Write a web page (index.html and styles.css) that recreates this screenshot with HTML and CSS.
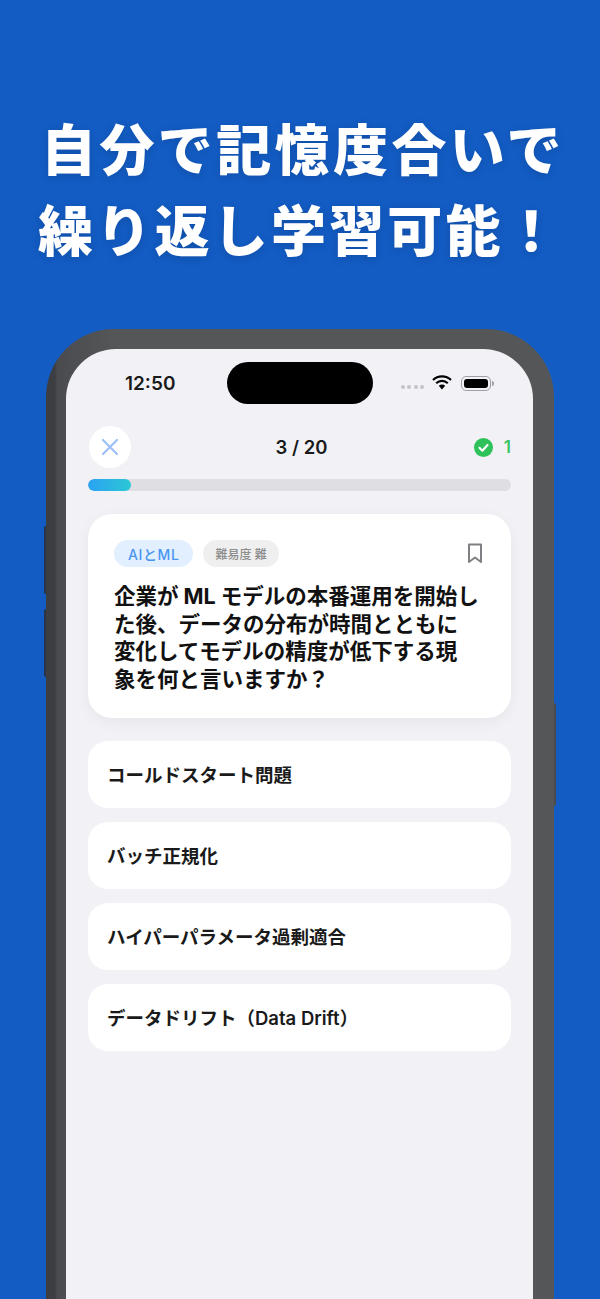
FILE: index.html
```html
<!DOCTYPE html>
<html lang="ja">
<head>
<meta charset="utf-8">
<title>クイズ</title>
<link rel="stylesheet" href="styles.css">
</head>
<body>
<div class="page">
  <h1 class="headline"><span class="line-a">自分で記憶度合いで</span><span class="line-b">繰り返し学習可能！</span></h1>
  <div class="phone">
    <i class="side-btn btn-l1"></i><i class="side-btn btn-l2"></i><i class="side-btn btn-r"></i>
    <div class="screen">
      <div class="status">
        <span class="time">12:50</span>
        <div class="island"></div>
        <div class="status-right">
          <span class="dots"><i></i><i></i><i></i><i></i></span>
          <svg class="wifi" width="20" height="15" viewBox="0 0 20 15"><path d="M1 5 A13 13 0 0 1 19 5" fill="none" stroke="#000" stroke-width="2.2"/><path d="M4.2 8.2 A8.5 8.5 0 0 1 15.8 8.2" fill="none" stroke="#000" stroke-width="2.2"/><path d="M10 14.5 L6.8 10.8 A5 5 0 0 1 13.2 10.8 Z" fill="#000"/></svg>
          <span class="battery"><i></i></span>
        </div>
      </div>
      <div class="quiz-head">
        <button class="close" aria-label="閉じる"><svg width="18" height="18" viewBox="0 0 18 18"><path d="M2 2 L16 16 M16 2 L2 16" stroke="#9dbff5" stroke-width="2.2" stroke-linecap="round"/></svg></button>
        <span class="count">3 / 20</span>
        <span class="score"><svg width="19" height="19" viewBox="0 0 18 18"><circle cx="9" cy="9" r="9" fill="#2fc25b"/><path d="M5.2 9.3 L7.9 12 L12.8 6.6" fill="none" stroke="#fff" stroke-width="2" stroke-linecap="round" stroke-linejoin="round"/></svg><b>1</b></span>
      </div>
      <div class="progress"><div class="fill" style="width:10.2%"></div></div>
      <section class="card">
        <div class="tags">
          <span class="tag tag-blue">AIとML</span>
          <span class="tag tag-gray">難易度 難</span>
          <svg class="bookmark" width="16" height="21" viewBox="0 0 16 21"><path d="M2 1.5 H14 V19 L8 14.5 L2 19 Z" fill="none" stroke="#808084" stroke-width="2" stroke-linejoin="round"/></svg>
        </div>
        <p class="question">企業が ML モデルの本番運用を開始し<br>た後、データの分布が時間とともに<br>変化してモデルの精度が低下する現<br>象を何と言いますか？</p>
      </section>
      <div class="options">
        <div class="option">コールドスタート問題</div>
        <div class="option">バッチ正規化</div>
        <div class="option">ハイパーパラメータ過剰適合</div>
        <div class="option">データドリフト（Data Drift）</div>
      </div>
    </div>
  </div>
</div>
</body>
</html>
```
FILE: styles.css
```css
* { box-sizing: border-box; }
html, body { margin: 0; padding: 0; }
body {
  width: 600px;
  height: 1299px;
  overflow: hidden;
  background: #135cc4;
  font-family: Inter, "Noto Sans CJK JP", sans-serif;
  color: #111;
}
.page { display: flex; flex-direction: column; align-items: center; height: 1299px; }
.headline {
  flex: none;
  margin: 0;
  padding-top: 110px;
  height: 329px;
  width: 600px;
  display: flex;
  flex-direction: column;
  align-items: center;
  font-size: 55px;
  line-height: 81px;
  font-weight: 800;
  color: #fff;
  text-shadow: 0 2px 8px rgba(0, 0, 0, .15);
  white-space: nowrap;
}
.line-a { letter-spacing: 3.4px; margin-left: 6px; }
.line-b { letter-spacing: 3.2px; }
.phone {
  position: relative;
  width: 508px;
  height: 970px;
  flex: none;
  padding: 20px 20px 0;
  border-radius: 68px 68px 0 0;
  background: linear-gradient(90deg, #3d3e41 0, #3d3e41 9px, #4a4b4f 11px, #4c4d50 20px, #555658 70px);
}
.side-btn { position: absolute; width: 2px; background: #2a3347; }
.btn-l1 { left: -2px; top: 197px; height: 68px; border-radius: 2px 0 0 2px; }
.btn-l2 { left: -2px; top: 280px; height: 68px; border-radius: 2px 0 0 2px; }
.btn-r { right: -2px; top: 374px; height: 103px; background: #4a4b4e; border-radius: 0 2px 2px 0; }
.screen {
  width: 467px;
  height: 950px;
  background: #f1f1f6;
  border-radius: 50px 50px 0 0;
  padding: 13px 22px 0;
  overflow: hidden;
}
.status { position: relative; display: flex; justify-content: space-between; align-items: center; height: 42px; }
.time { font-size: 19px; font-weight: 600; margin-left: 37px; color: #1a1a1a; }
.island { position: absolute; left: 139px; top: 0; width: 146px; height: 42px; border-radius: 21px; background: #000; }
.status-right { display: flex; align-items: center; gap: 8px; margin-right: 20px; }
.dots { display: flex; gap: 2.4px; margin-top: 8px; }
.dots i { width: 4px; height: 4px; border-radius: 50%; background: #c4c4c8; }
.wifi { margin-top: -1px; }
.battery { position: relative; display: block; width: 30px; height: 15px; padding: 2px; border: 1px solid #a0a0a4; border-radius: 5px; margin-left: 1px; }
.battery i { display: block; height: 100%; background: #000; border-radius: 3px; }
.battery::after { content: ""; position: absolute; right: -4px; top: 4px; width: 2px; height: 5px; background: #a0a0a4; border-radius: 0 2px 2px 0; }
.quiz-head { position: relative; display: flex; justify-content: space-between; align-items: center; height: 42px; margin-top: 22px; }
.close {
  width: 42px; height: 42px; padding: 0; margin-left: 1px;
  border: 0; border-radius: 50%; background: #fff;
  display: flex; align-items: center; justify-content: center;
}
.count { position: absolute; left: 4px; right: 0; text-align: center; font-size: 18.5px; font-weight: 600; color: #1a1a1a; }
.score { display: flex; align-items: center; gap: 11px; margin-right: 1px; }
.score b { font-size: 17px; font-weight: 600; color: #3cc363; margin-right: -1px; }
.progress { height: 12px; margin-top: 11px; border-radius: 6px; background: #dedee3; overflow: hidden; }
.fill { height: 100%; border-radius: 6px; background: linear-gradient(90deg, #2aa2f3, #2cc8d4); }
.card {
  height: 204px;
  margin-top: 23px;
  padding: 26px 26px 0;
  background: #fff;
  border-radius: 24px;
  box-shadow: 0 4px 14px rgba(0, 0, 0, .05);
}
.tags { display: flex; align-items: center; gap: 10px; height: 27px; }
.tag { display: flex; align-items: center; height: 27px; padding: 0 14px; border-radius: 14px; font-size: 14px; font-weight: 500; white-space: nowrap; letter-spacing: .6px; }
.tag-blue { background: #e1effe; color: #4a95f0; }
.tag-gray { background: #efefef; color: #8c8c8c; padding: 0 12px; font-size: 12px; letter-spacing: 0; }
.bookmark { margin-left: auto; margin-right: 2px; }
.question { margin: 16px 0 0; font-size: 21.5px; line-height: 27.5px; font-weight: 700; color: #111; white-space: nowrap; }
.options { display: flex; flex-direction: column; gap: 14.5px; margin-top: 23px; }
.option { display: flex; align-items: center; height: 66.5px; padding: 0 19px; background: #fff; border-radius: 20px; font-size: 18.5px; font-weight: 600; color: #1a1a1a; }
```
